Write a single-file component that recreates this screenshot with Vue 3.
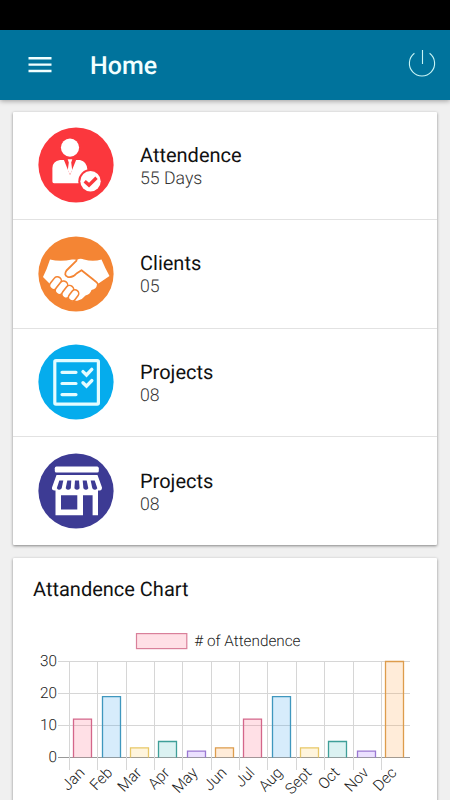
<template>
  <div class="screen">
    <div class="status-bar"></div>

    <!-- Toolbar -->
    <header class="toolbar">
      <button class="icon-btn" aria-label="Menu">
        <svg width="24" height="18" viewBox="0 0 24 18">
          <path d="M0.5 2.2H23.5M0.5 8.6H23.5M0.5 15H23.5" stroke="#f2ffff" stroke-width="2.4" />
        </svg>
      </button>
      <h1 class="toolbar-title">Home</h1>
      <button class="icon-btn power" aria-label="Log out">
        <svg width="28" height="28" viewBox="0 0 28 28" fill="none" stroke="#c8f5f5" stroke-width="1.1">
          <path d="M6.4 4.3A12.6 12.6 0 1 0 21.6 4.3M14.5 1V15" />
        </svg>
      </button>
    </header>

    <main class="content">
      <section class="card">
        <div v-for="(item, idx) in items" :key="idx" class="row">
          <svg class="row-icon" viewBox="0 0 76 76">
            <circle cx="38" cy="38" r="37.6" :fill="item.color" />

            <!-- person with check -->
            <g v-if="item.icon === 'person'">
              <circle cx="32" cy="20.6" r="9.1" fill="#fff" />
              <path d="M16 56.3Q14.4 56.3 14.4 54.5V41Q14.4 34.5 22 33H42Q49 34.5 49.5 43V44A11.5 11.5 0 0 0 42 56.3Z" fill="#fff" />
              <path d="M25.5 32L32 48L38.5 32Z" :fill="item.color" />
              <path d="M29.7 32.2H34.3L33.2 35.5L34.2 43L32 47.5L29.8 43L30.8 35.5Z" fill="#fff" />
              <circle cx="52.5" cy="54.3" r="12.2" :fill="item.color" />
              <circle cx="52.5" cy="54.3" r="10.2" fill="#fff" />
              <path d="M46.7 54.2L51 58.1L58.5 50.8" fill="none" :stroke="item.color" stroke-width="3.4" />
            </g>

            <!-- handshake -->
            <g v-else-if="item.icon === 'hands'">
              <path
                d="M12 23.5Q22 26 34 23.6Q37 23 39 24Q42 22 46 23.5Q55 26 63.5 23.5Q67 32 71.5 40L59 48.5Q58.5 53 53.5 54Q52 58.5 47.5 59.5Q45 63 40 64.5Q36 65.5 32 62L14 50Q10 46 5 41Q9 33 12 23.5Z"
                fill="#fff"
              />
              <path
                d="M39 24.2L28.5 34.5Q25.5 39 29.5 40.8Q34.5 42.3 38.5 37.5L43.5 34.2L55.5 43.8Q60 47 60 49"
                fill="none" :stroke="item.color" stroke-width="1.8" stroke-linejoin="round"
              />
              <g fill="#fff" :stroke="item.color" stroke-width="1.6">
                <rect x="-4" y="-7" width="8" height="14" rx="4" transform="translate(17.5 47.2) rotate(38)" />
                <rect x="-4" y="-7.5" width="8" height="15" rx="4" transform="translate(23.5 51.8) rotate(38)" />
                <rect x="-4" y="-7" width="8" height="14" rx="4" transform="translate(29.8 55.8) rotate(38)" />
                <rect x="-3.7" y="-6" width="7.4" height="12" rx="3.7" transform="translate(35.6 59.4) rotate(38)" />
              </g>
            </g>

            <!-- checklist -->
            <g v-else-if="item.icon === 'list'" fill="none" stroke="#e4fcff" stroke-linecap="round">
              <rect x="16.8" y="16.6" width="43.6" height="43.6" rx="1.2" stroke-width="3.2" />
              <path d="M24 28.3H38M24 39.5H38M24 50.6H38" stroke-width="3.2" />
              <path d="M45 27.6L48.5 31L53.8 25.4M45 38.8L48.5 42.2L53.8 36.6" stroke-width="3.4" />
            </g>

            <!-- shop -->
            <g v-else>
              <rect x="16.8" y="13.6" width="44" height="6" rx="1.6" fill="#fff" />
              <path
                d="M18.5 22H59.5L64 34.5Q64 38 61 37.5H16.8Q13.5 37.5 14 34.5Z"
                fill="#fff"
              />
              <g :fill="item.color">
                <path d="M21.3 27.5H25.3L23.7 35.3Q21 38.3 18.8 35.3Z" />
                <path d="M29.3 27.5H33.3L32.8 35.3Q30 38.3 27.7 35.3Z" />
                <path d="M37 27.5H41L41.6 35.3Q39 38.3 36.4 35.3Z" />
                <path d="M44.7 27.5H48.7L50.3 35.3Q48 38.3 45.4 35.3Z" />
                <path d="M52.7 27.5H56.7L59.3 35.3Q57 38.3 54.3 35.3Z" />
              </g>
              <path
                d="M17.5 37H60V62.3H54.6V42.3H45V62.3H17.5ZM23 42.3V56.5H39.3V42.3Z"
                fill="#fff" fill-rule="evenodd"
              />
            </g>
          </svg>
          <div class="row-info">
            <span class="row-title">{{ item.title }}</span>
            <span class="row-value">{{ item.value }}</span>
          </div>
        </div>
      </section>

      <section class="card chart-card">
        <h2 class="chart-title">Attandence Chart</h2>
        <svg class="chart" width="424" height="190" viewBox="0 0 424 190">
          <!-- legend -->
          <rect x="123.5" y="13.6" width="50.3" height="15" fill="#ffe0e6" stroke="#d9809a" stroke-width="1.2" />
          <text class="legend-text" x="181.3" y="26">{{ legend }}</text>

          <!-- grid -->
          <g v-for="tick in ticks" :key="'t' + tick">
            <line x1="45" x2="397" :y1="toY(tick)" :y2="toY(tick)" :stroke="tick ? '#d6d6d6' : '#999'" />
            <text class="tick-text" x="44" :y="toY(tick) + 4.6" text-anchor="end">{{ tick }}</text>
          </g>
          <line
            v-for="(bar, idx) in bars" :key="'g' + idx"
            :x1="gridX(idx)" :x2="gridX(idx)" y1="41.5" y2="150" stroke="#d6d6d6"
          />

          <!-- bars -->
          <g v-for="(bar, idx) in bars" :key="'b' + idx">
            <rect
              :x="barX(idx)" :y="toY(bar.value)" width="19" :height="toY(0) - toY(bar.value)"
              :fill="bar.color" fill-opacity="0.2"
            />
            <path
              :d="`M${barX(idx) + 0.5} ${toY(0)}V${toY(bar.value)}H${barX(idx) + 18.5}V${toY(0)}`"
              fill="none" :stroke="bar.line" stroke-width="1.3"
            />
            <text
              class="tick-text" text-anchor="end"
              :transform="`translate(${gridX(idx) + 16} 153.5) rotate(-46)`"
            >{{ bar.label }}</text>
          </g>
        </svg>
      </section>
    </main>
  </div>
</template>

<script setup>
const items = [
  { title: 'Attendence', value: '55 Days', icon: 'person', color: '#fb373d' },
  { title: 'Clients', value: '05', icon: 'hands', color: '#f48534' },
  { title: 'Projects', value: '08', icon: 'list', color: '#05aced' },
  { title: 'Projects', value: '08', icon: 'shop', color: '#3d3b94' }
]

const legend = '# of Attendence'
const ticks = [30, 20, 10, 0]

const months = ['Jan', 'Feb', 'Mar', 'Apr', 'May', 'Jun', 'Jul', 'Aug', 'Sept', 'Oct', 'Nov', 'Dec']
const values = [12, 19, 3, 5, 2, 3, 12, 19, 3, 5, 2, 30]
const palette = [
  { color: '#ff6384', line: '#d4668a' },
  { color: '#36a2eb', line: '#3f97be' },
  { color: '#ffce56', line: '#e8c767' },
  { color: '#4bc0c0', line: '#3f9f99' },
  { color: '#9966ff', line: '#9a78d2' },
  { color: '#ff9f40', line: '#dd9c4c' }
]

const bars = months.map((label, i) => ({
  label,
  value: values[i],
  ...palette[i % palette.length]
}))

function toY(v) {
  return 137.5 - v * 3.2
}

function gridX(i) {
  return Math.round(57 + i * 28.35) - 0.5
}

function barX(i) {
  return Math.round(60.3 + i * 28.35)
}
</script>

<style>
body {
  margin: 0;
  background: #f0f0f0;
}
</style>

<style scoped>
.screen {
  height: 800px;
  overflow: hidden;
  background: #f0f0f0;
  font-family: Roboto, "Liberation Sans", sans-serif;
  text-rendering: geometricPrecision;
  display: flex;
  flex-direction: column;
}

.status-bar {
  height: 30px;
  flex-shrink: 0;
  background: #000;
}

.toolbar {
  height: 70px;
  flex-shrink: 0;
  box-sizing: border-box;
  padding: 0 14px 0 28px;
  display: flex;
  align-items: center;
  background: #00739c;
  box-shadow: 0 1px 5px rgba(0, 0, 0, 0.35);
}

.icon-btn {
  display: flex;
  padding: 0;
  border: none;
  background: none;
}

.power {
  margin-bottom: 4px;
}

.toolbar-title {
  flex: 1;
  margin: 2px 0 0 38px;
  font-size: 25px;
  font-weight: 500;
  color: #f2ffff;
}

.content {
  padding: 12px 13px 0;
}

.card {
  background: #fff;
  border-radius: 1px;
  box-shadow: 0 1px 3px rgba(0, 0, 0, 0.45);
}

.row {
  height: 108.75px;
  box-sizing: border-box;
  padding-left: 25px;
  display: flex;
  align-items: center;
  border-bottom: 1px solid #e2e2e2;
}

.row:first-child {
  height: 107.75px;
}

.row:last-child {
  height: 107.75px;
  border-bottom: none;
}

.row-icon {
  width: 76px;
  height: 76px;
  flex-shrink: 0;
}

.row-info {
  margin: 3px 0 0 26px;
  display: flex;
  flex-direction: column;
}

.row-title {
  font-size: 20px;
  line-height: 24px;
  color: #111;
}

.row-value {
  font-size: 17.7px;
  font-weight: 350;
  line-height: 24px;
  color: #333;
}

.chart-card {
  height: 260px;
  margin-top: 13px;
}

.chart-title {
  margin: 0;
  padding: 19px 20px 0;
  height: 43px;
  font-size: 20px;
  line-height: 24px;
  font-weight: 400;
  color: #111;
}

.chart {
  display: block;
}

.legend-text,
.tick-text {
  font-size: 15.3px;
  font-weight: 350;
  fill: #222;
}
</style>
